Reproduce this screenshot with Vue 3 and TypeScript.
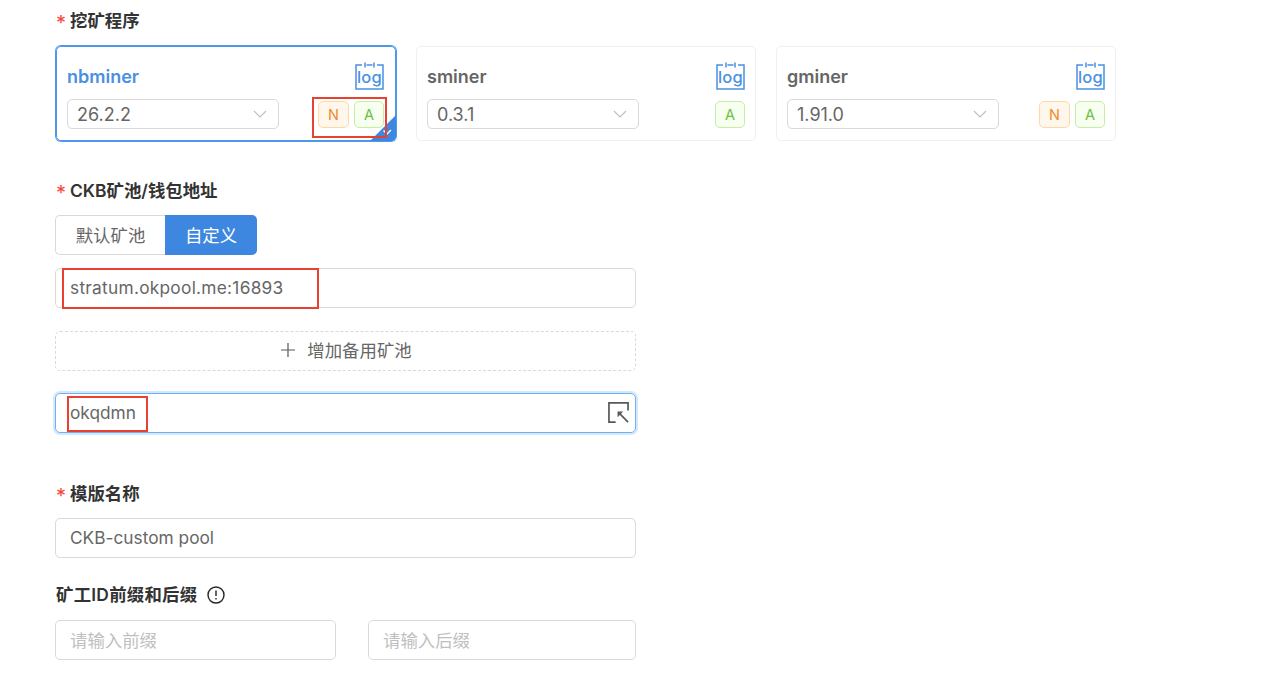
<script setup lang="ts">
interface Miner { name: string; version: string; tags: string[]; active?: boolean }
const miners: Miner[] = [
  { name: 'nbminer', version: '26.2.2', tags: ['N', 'A'], active: true },
  { name: 'sminer', version: '0.3.1', tags: ['A'] },
  { name: 'gminer', version: '1.91.0', tags: ['N', 'A'] },
]
</script>

<template>
  <main class="page">
    <section class="sec-miner">
      <div class="label"><span class="req">*</span>挖矿程序</div>
      <div class="cards">
        <div v-for="m in miners" :key="m.name" class="card" :class="{ active: m.active }">
          <div class="card-top">
            <span class="miner-name">{{ m.name }}</span>
            <span class="log">
              <svg class="log-frame" width="29" height="28" viewBox="0 0 29 28" fill="none" stroke="#4a90e2" stroke-width="1.5">
                <path d="M7 3H1v24h27V3h-6M11.500 3h6M10 0.500v5M19 0.500v5" />
              </svg>
              <span class="log-text">log</span>
            </span>
          </div>
          <div class="card-bottom">
            <div class="select">
              <span>{{ m.version }}</span>
              <svg width="14" height="8" viewBox="0 0 14 8" fill="none" stroke="#bfbfbf" stroke-width="1.2">
                <path d="M1 1l6 6 6-6" />
              </svg>
            </div>
            <div class="tags">
              <span v-for="t in m.tags" :key="t" class="tag" :class="t === 'N' ? 'tag-n' : 'tag-a'">{{ t }}</span>
            </div>
          </div>
          <span v-if="m.active" class="corner">
            <svg width="26" height="26" viewBox="0 0 26 26">
              <path d="M26 0V21a5 5 0 0 1-5 5H0Z" fill="#3d87e0" />
              <path d="M13.500 15.500l3.500 3.500 4-4" fill="none" stroke="#fff" stroke-width="1.400" />
            </svg>
          </span>
          <span v-if="m.active" class="mark mark-tags"></span>
        </div>
      </div>
    </section>

    <section class="sec-pool">
      <div class="label"><span class="req">*</span>CKB矿池/钱包地址</div>
      <div class="segment">
        <span class="seg">默认矿池</span>
        <span class="seg seg-on">自定义</span>
      </div>
      <div class="field wide pool-input">
        stratum.okpool.me:16893
        <span class="mark mark-pool"></span>
      </div>
      <div class="add-pool">
        <svg width="14" height="14" viewBox="0 0 14 14" stroke="#595959" stroke-width="1.200">
          <path d="M7 0v14M0 7h14" />
        </svg>
        <span>增加备用矿池</span>
      </div>
      <div class="field wide focused">
        okqdmn
        <span class="mark mark-wallet"></span>
        <svg class="pick" width="21" height="21" viewBox="0 0 22 22" fill="none" stroke="#595959">
          <path d="M21 9V1H1v20h7" stroke-width="1.800" />
          <path d="M12 12l9 9" stroke-width="1.800" />
          <path d="M10 10h6l-6 6Z" fill="#595959" stroke="none" />
        </svg>
      </div>
    </section>

    <section class="sec-name">
      <div class="label"><span class="req">*</span>模版名称</div>
      <div class="field wide">CKB-custom pool</div>
    </section>

    <section class="sec-id">
      <div class="label label-plain">
        矿工ID前缀和后缀
        <svg class="info" width="18" height="18" viewBox="0 0 18 18" fill="none" stroke="#262626" stroke-width="1.400">
          <circle cx="9" cy="9" r="8" />
          <path d="M9 4.500v5.500M9 12v1.500" />
        </svg>
      </div>
      <div class="pair">
        <div class="field placeholder prefix">请输入前缀</div>
        <div class="field placeholder suffix">请输入后缀</div>
      </div>
    </section>
  </main>
</template>

<style scoped>
.page {
  box-sizing: border-box;
  width: 1266px;
  height: 691px;
  overflow: hidden;
  padding: 10px 0 0 55px;
  background: #fff;
  font-family: Inter, "Noto Sans CJK SC", sans-serif;
  color: #666;
}
.label {
  display: flex;
  align-items: center;
  height: 22px;
  font-size: 17.400px;
  font-weight: 600;
  color: #333;
  line-height: 22px;
}
.label-plain {
  padding-left: 1px;
  letter-spacing: 0.250px;
}
.req {
  color: #f5453a;
  font-size: 20px;
  font-weight: 400;
  width: 15px;
  padding-left: 1px;
  padding-top: 3px;
  box-sizing: border-box;
}
.cards {
  display: flex;
  gap: 20px;
  margin: 14px 0 0 1px;
}
.card {
  position: relative;
  box-sizing: border-box;
  width: 340px;
  height: 95px;
  border: 1px solid #f0f0f0;
  border-radius: 5px;
  padding: 15px 10px 11px;
  display: flex;
  flex-direction: column;
  justify-content: space-between;
}
.card.active {
  border-color: #4f97e8;
  box-shadow: 0 0 0 1px #4f97e8;
  padding-right: 11px;
}
.card-top {
  display: flex;
  justify-content: space-between;
  align-items: flex-end;
}
.miner-name {
  font-size: 18px;
  font-weight: 600;
  line-height: 24px;
  color: #666;
  margin-bottom: 1px;
}
.active .miner-name {
  color: #4a90e2;
}
.log {
  position: relative;
  display: block;
  width: 29px;
  height: 28px;
}
.log-frame {
  display: block;
}
.log-text {
  position: absolute;
  left: 0;
  right: 0;
  top: 5px;
  text-align: center;
  font-size: 16.500px;
  font-weight: 500;
  letter-spacing: 0.300px;
  line-height: 20px;
  color: #4a90e2;
}
.card-bottom {
  display: flex;
  justify-content: space-between;
  align-items: center;
}
.select {
  box-sizing: border-box;
  width: 212px;
  height: 30px;
  border: 1px solid #d9d9d9;
  border-radius: 5px;
  padding: 0 11px 0 9px;
  display: flex;
  align-items: center;
  justify-content: space-between;
  font-size: 18px;
}
.tags {
  display: flex;
  gap: 5px;
}
.tag {
  box-sizing: border-box;
  width: 30px;
  height: 27px;
  border-radius: 5px;
  border: 1px solid;
  font-size: 14.500px;
  display: flex;
  align-items: center;
  justify-content: center;
}
.tag-n {
  width: 31px;
  color: #f08a2c;
  background: #fff7ec;
  border-color: #fdd9a8;
}
.tag-a {
  color: #6cc03a;
  background: #f7fff0;
  border-color: #c6eda3;
}
.corner {
  position: absolute;
  right: -1px;
  bottom: -1px;
  width: 26px;
  height: 26px;
  line-height: 0;
}
.mark {
  position: absolute;
  border: 2px solid #e8412f;
  box-sizing: border-box;
  pointer-events: none;
}
.mark-tags {
  left: 255px;
  top: 50px;
  width: 75px;
  height: 41px;
}
.mark-pool {
  left: 6px;
  top: -1px;
  width: 257px;
  height: 41px;
}
.mark-wallet {
  left: 11px;
  top: 2px;
  width: 81px;
  height: 36px;
}
.sec-pool {
  margin-top: 39px;
}
.segment {
  display: flex;
  margin-top: 13px;
  width: 202px;
  height: 40px;
  font-size: 17.400px;
}
.seg {
  box-sizing: border-box;
  width: 110px;
  border: 1px solid #d9d9d9;
  border-right: 0;
  border-radius: 5px 0 0 5px;
  padding-bottom: 2px;
  display: flex;
  align-items: center;
  justify-content: center;
}
.seg-on {
  width: 92px;
  border: 0;
  border-radius: 0 5px 5px 0;
  background: #3d87e0;
  color: #fff;
}
.field {
  position: relative;
  box-sizing: border-box;
  height: 40px;
  border: 1px solid #d9d9d9;
  border-radius: 5px;
  padding: 0 14px 2px;
  display: flex;
  align-items: center;
  font-size: 17.300px;
}
.wide {
  width: 581px;
}
.pool-input {
  margin-top: 13px;
  letter-spacing: 0.270px;
}
.add-pool {
  box-sizing: border-box;
  width: 581px;
  height: 40px;
  margin-top: 23px;
  padding-bottom: 3px;
  border: 1px dashed #d9d9d9;
  border-radius: 5px;
  display: flex;
  align-items: center;
  justify-content: center;
  gap: 12px;
  font-size: 17.400px;
}
.add-pool svg {
  margin-left: 2px;
}
.focused {
  margin-top: 22px;
  border-color: #6fb0f2;
  box-shadow: 0 0 0 2px #d6e8fb;
}
.pick {
  position: absolute;
  right: 6px;
  top: 8px;
}
.sec-name {
  margin-top: 50px;
}
.sec-name .field {
  margin-top: 13px;
}
.sec-id {
  margin-top: 26px;
}
.info {
  margin-left: 10px;
}
.pair {
  display: flex;
  gap: 32px;
  width: 581px;
  margin-top: 14px;
}
.prefix {
  width: 281px;
}
.suffix {
  width: 268px;
}
.placeholder {
  color: #bfbfbf;
  font-size: 17.400px;
}
</style>
